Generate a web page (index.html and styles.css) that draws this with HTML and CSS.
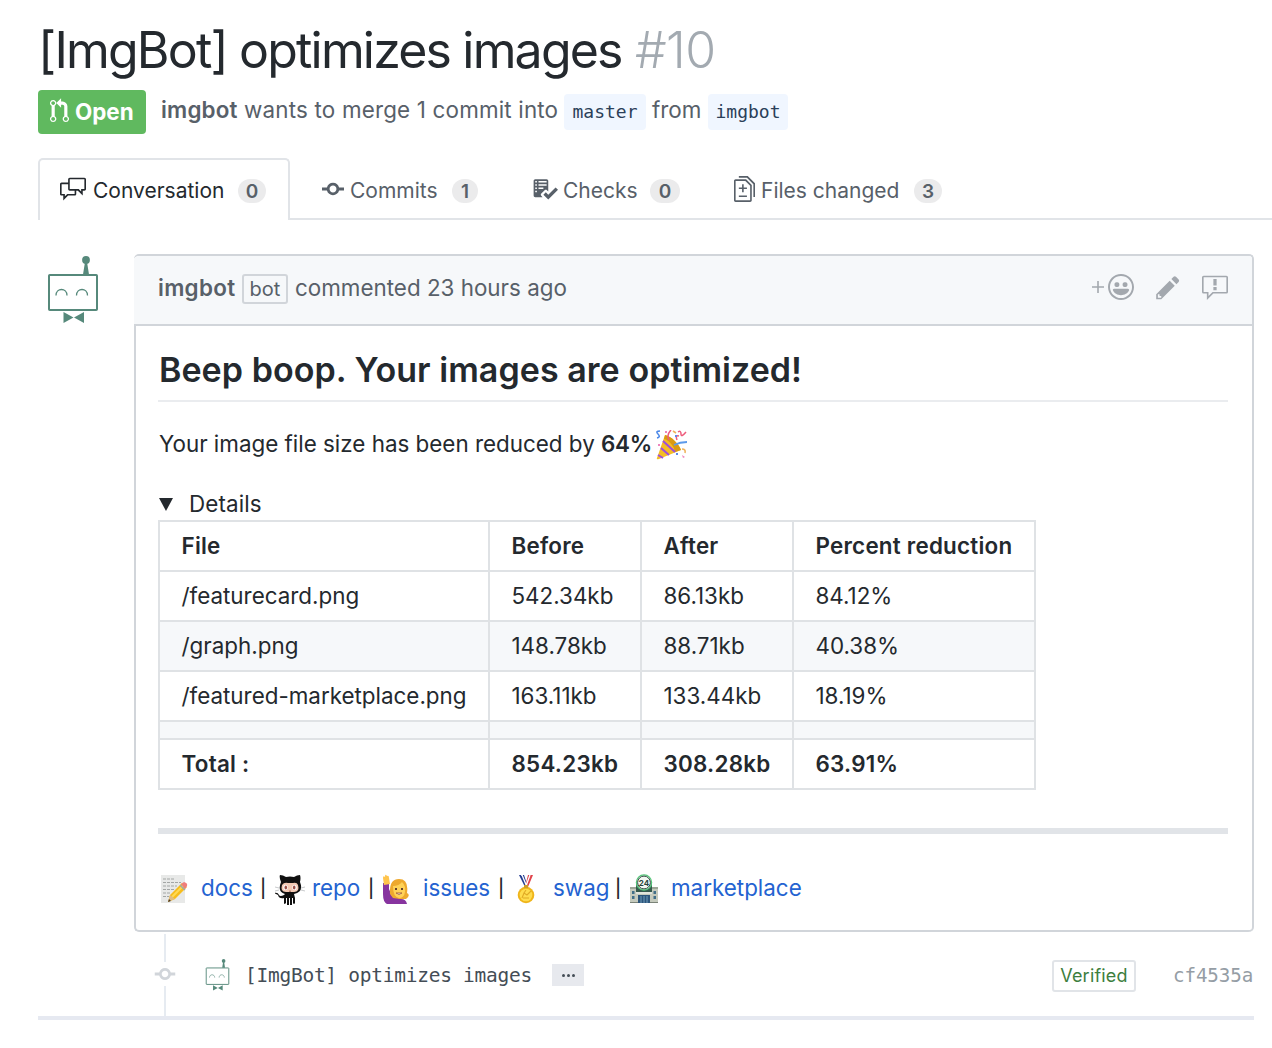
FILE: index.html
```html
<!DOCTYPE html>
<html lang="en">
<head>
<meta charset="utf-8">
<title>[ImgBot] optimizes images #10</title>
<link rel="stylesheet" href="styles.css">
</head>
<body>
<svg class="defs" width="0" height="0" aria-hidden="true">
  <symbol id="commit" viewBox="0 0 14 16"><path d="M10.86 7c-.45-1.72-2-3-3.86-3-1.86 0-3.41 1.28-3.86 3H0v2h3.14c.45 1.72 2 3 3.86 3 1.86 0 3.41-1.28 3.86-3H14V7h-3.14zM7 10.2c-1.22 0-2.2-.98-2.2-2.2 0-1.22.98-2.2 2.2-2.2 1.22 0 2.2.98 2.2 2.2 0 1.22-.98 2.2-2.2 2.2z"/></symbol>
  <symbol id="robot" viewBox="0 0 52 68">
    <rect x="2" y="19" width="48" height="35" rx=".8" fill="none" stroke="currentColor" stroke-width="2"/>
    <circle cx="39" cy="4" r="3.9"/>
    <path d="M38 6h2l2 12.500h-6zM16.500 56l10 5.500-10 5.500zM37 56l-10 5.500 10 5.500z"/>
    <path d="M9 39.500c0-8 11-8 11 0M29.500 39.500c0-8 11-8 11 0" fill="none" stroke="currentColor" stroke-width="1.300"/>
  </symbol>
</svg>
<main class="page">
  <h1 class="title"><span class="title-text">[ImgBot] optimizes images</span> <span class="number">#10</span></h1>

  <div class="meta">
    <span class="state"><svg width="19" height="26" viewBox="0 0 12 16"><path d="M11 11.280V5c-.03-.78-.34-1.470-.94-2.060C9.460 2.350 8.780 2.030 8 2H7V0L4 3l3 3V4h1c.27.02.48.11.69.31.21.2.3.42.31.69v6.280A1.993 1.993 0 0 0 10 15a1.993 1.993 0 0 0 1-3.720zm-1 2.920c-.66 0-1.200-.55-1.200-1.200 0-.65.55-1.200 1.200-1.200.65 0 1.200.55 1.200 1.200 0 .65-.55 1.200-1.200 1.200zM4 3c0-1.110-.89-2-2-2a1.993 1.993 0 0 0-1 3.720v6.560A1.993 1.993 0 0 0 2 15a1.993 1.993 0 0 0 1-3.720V4.720c.59-.34 1-.98 1-1.720zm-.8 10c0 .66-.55 1.200-1.200 1.200-.65 0-1.200-.55-1.200-1.200 0-.65.55-1.200 1.200-1.200.65 0 1.200.55 1.200 1.200zM2 4.200C1.340 4.200.8 3.650.8 3c0-.65.55-1.200 1.200-1.200.65 0 1.200.55 1.200 1.200 0 .65-.55 1.200-1.200 1.200z"/></svg><span>Open</span></span>
    <span class="merge"><b>imgbot</b> wants to merge 1 commit into</span>
    <code class="branch branch-base">master</code>
    <span class="from">from</span>
    <code class="branch branch-head">imgbot</code>
  </div>

  <nav class="tabs">
    <a class="tab active"><svg width="26" height="26" viewBox="0 0 16 16"><path d="M15 1H6c-.55 0-1 .45-1 1v2H1c-.55 0-1 .45-1 1v6c0 .55.45 1 1 1h1v3l3-3h4c.55 0 1-.45 1-1V9h1l3 3V9h1c.55 0 1-.45 1-1V2c0-.55-.45-1-1-1zM9 11H4.500L3 12.500V11H1V5h4v3c0 .55.45 1 1 1h3v2zm6-3h-2v1.500L11.500 8H6V2h9v6z"/></svg><span class="label">Conversation</span><span class="count">0</span></a>
    <a class="tab commits"><svg width="22" height="26"><use href="#commit"/></svg><span class="label">Commits</span><span class="count">1</span></a>
    <a class="tab checks"><svg width="26" height="26" viewBox="0 0 16 16"><path fill-rule="evenodd" d="M16 8.500l-6 6-3-3L8.500 10l1.500 1.500L14.500 7 16 8.500zM5.700 12.200l.8.8H2c-.55 0-1-.45-1-1V3c0-.55.45-1 1-1h7c.55 0 1 .45 1 1v6.500l-.8-.8c-.39-.39-1.030-.39-1.420 0L5.700 10.800a.996.996 0 0 0 0 1.410v-.01zM4 4h5V3H4v1zm0 2h5V5H4v1zm0 2h3V7H4v1zM3 9H2v1h1V9zm0-2H2v1h1V7zm0-2H2v1h1V5zm0-2H2v1h1V3z"/></svg><span class="label">Checks</span><span class="count">0</span></a>
    <a class="tab files"><svg width="21" height="26" viewBox="0 0 13 16"><path d="M6 7h2v1H6v2H5V8H3V7h2V5h1v2zm-3 6h5v-1H3v1zM7.500 2L11 5.500V15c0 .55-.45 1-1 1H1c-.55 0-1-.45-1-1V3c0-.55.45-1 1-1h6.500zM10 6L7 3H1v12h9V6zM8.500 0H3v1h5l4 4v8h1V4.500L8.500 0z"/></svg><span class="label">Files changed</span><span class="count">3</span></a>
  </nav>

  <section class="thread">
    <svg class="avatar" width="52" height="68"><use href="#robot"/></svg>
    <article class="comment">
      <header class="comment-head">
        <b>imgbot</b><span class="bot">bot</span><span class="when">commented 23 hours ago</span>
        <div class="actions">
          <svg width="12" height="12" viewBox="0 0 12 12"><path d="M5.200 0h1.600v5.200H12v1.600H6.800V12H5.200V6.800H0V5.200h5.200z"/></svg>
          <svg class="smile" width="26" height="26" viewBox="0 0 16 16"><path d="M8 0C3.580 0 0 3.580 0 8s3.580 8 8 8 8-3.580 8-8-3.580-8-8-8zm4.810 12.810a6.720 6.720 0 0 1-2.170 1.450c-.83.36-1.720.53-2.640.53-.92 0-1.810-.17-2.640-.53-.81-.34-1.550-.83-2.170-1.450a6.773 6.773 0 0 1-1.450-2.170A6.590 6.590 0 0 1 1.210 8c0-.92.17-1.810.53-2.640.34-.81.83-1.550 1.450-2.170.62-.62 1.360-1.110 2.170-1.450A6.590 6.590 0 0 1 8 1.210c.92 0 1.810.17 2.640.53.81.34 1.550.83 2.170 1.450.62.62 1.110 1.360 1.450 2.170.36.83.53 1.720.53 2.640 0 .92-.17 1.810-.53 2.640-.34.81-.83 1.550-1.450 2.170zM4 6.800v-.59c0-.66.53-1.190 1.200-1.190h.59c.66 0 1.190.53 1.190 1.190v.59c0 .67-.53 1.200-1.190 1.200H5.200C4.530 8 4 7.470 4 6.800zm5 0v-.59c0-.66.53-1.190 1.200-1.190h.59c.66 0 1.190.53 1.190 1.190v.59c0 .67-.53 1.200-1.190 1.200h-.59C9.530 8 9 7.470 9 6.800zm4 3.200c-.72 1.880-2.910 3-5 3s-4.280-1.130-5-3c-.14-.39.23-1 .66-1h8.590c.41 0 .89.61.75 1z"/></svg>
          <svg class="pencil" width="24" height="27" viewBox="0 0 14 16"><path d="M0 12v3h3l8-8-3-3-8 8zm3 2H1v-2h1v1h1v1zm10.300-9.300L12 6 9 3l1.300-1.300a.996.996 0 0 1 1.410 0l1.590 1.590c.39.39.39 1.020 0 1.410z"/></svg>
          <svg class="report" width="26" height="26" viewBox="0 0 16 16"><path fill-rule="evenodd" d="M0 2a1 1 0 0 1 1-1h14a1 1 0 0 1 1 1v9a1 1 0 0 1-1 1H7l-4 4v-4H1a1 1 0 0 1-1-1V2zm1 0h14v9H6.500L4 13.500V11H1V2zm6 6h2v2H7V8zm0-5h2v4H7V3z"/></svg>
        </div>
      </header>
      <div class="comment-body">
        <h2>Beep boop. Your images are optimized!</h2>
        <p class="summary"><span class="sentence">Your image file size has been reduced by</span><b>64%</b>
          <svg width="31" height="30" viewBox="0 0 31 30">
            <path d="M1 28L9 5C15 6 23 14 25 20L3 29Q0 30 1 28z" fill="#f5bd24"/>
            <path d="M9 5C15 6 23 14 25 20L19 22C18 16 13 10 8 9z" fill="#d99a13"/>
            <path d="M5 18l8 7M7 11l12 11M2 25l5 3" stroke="#9d4edd" stroke-width="2"/>
            <path d="M18 15q6-3 13-3" fill="none" stroke="#5c9aea" stroke-width="1.800"/>
            <path d="M13 10q-3-5 2-10M21 10q-2-5 2-4M22 2q3-2 3 2t5-2" fill="none" stroke="#ee5b7b" stroke-width="1.500"/>
            <path d="M1 8q4-1 1-4t2-3" fill="none" stroke="#4c88e8" stroke-width="1.500"/>
            <path d="M26 19q4 0 3 4M17 1l3 2" fill="none" stroke="#efb35d" stroke-width="1.600"/>
            <path d="M9 1h2v2H9zM26 25l3 2-2 1zM2 14h2v2H2z" fill="#ed84bd"/><path d="M20 23h2v2h-2zM19 5h2v2h-2z" fill="#5d8bea"/>
          </svg>
        </p>
        <div class="details"><svg width="14" height="13" viewBox="0 0 14 13"><path d="M0 0h14L7 13z"/></svg><span>Details</span></div>
        <table>
          <colgroup><col class="c1"><col class="c2"><col class="c3"><col class="c4"></colgroup>
          <tr><th>File</th><th>Before</th><th>After</th><th>Percent reduction</th></tr>
          <tr><td>/featurecard.png</td><td>542.34kb</td><td>86.13kb</td><td>84.12%</td></tr>
          <tr class="alt"><td>/graph.png</td><td>148.78kb</td><td>88.71kb</td><td>40.38%</td></tr>
          <tr><td>/featured-marketplace.png</td><td>163.11kb</td><td>133.44kb</td><td>18.19%</td></tr>
          <tr class="alt empty"><td></td><td></td><td></td><td></td></tr>
          <tr class="total"><td>Total :</td><td>854.23kb</td><td>308.28kb</td><td>63.91%</td></tr>
        </table>
        <hr>
        <div class="links">
          <svg width="30" height="30" viewBox="0 0 30 30">
            <path d="M3 1h24v28H3z" fill="#e8e9e8"/><path d="M5 5h11M5 8.500h18M5 12h14M5 15.500h12M5 19h8M5 22.500h6" stroke="#a3a6a5" stroke-width="1" stroke-dasharray="3 1"/>
            <path d="M10 28l2-7L24 9l5 4-12 12z" fill="#f7bd1c"/><path d="M14 23L26 11" stroke="#ffda54" stroke-width="2"/><path d="M23 10l3-2q4 1 3 4l-2 3z" fill="#ef7e7c"/><path d="M22 11l5 5" stroke="#9da8ad" stroke-width="1.500"/><path d="M12 21l5 4-7 3z" fill="#e1bd82"/><path d="M10 28l1-3 2 2z" fill="#493926"/>
          </svg><a>docs</a><span>|</span>
          <svg width="32" height="32" viewBox="0 0 32 32">
            <path d="M6 9Q4 4 5 2q3 0 6 2 4-1 8 0 3-2 6-2 1 3 0 7 4 10-6 12l1 4v5q-1 2-2 0v-5h-1v7h-2v-7h-1v7h-2v-7h-1v5q-2 2-2 0v-5q-5 1-6-3l-4-2q4-1 5 2 1 2 5 0l1-1Q2 19 6 9z" fill="#101010"/>
            <path d="M7 12q2-3 6-2h5q4-1 5 2 2 7-4 7h-8q-6 0-4-7z" fill="#f3c9b3"/><ellipse cx="10.500" cy="14.500" rx="2.200" ry="2.800" fill="#fff"/><ellipse cx="19.500" cy="14.500" rx="2.200" ry="2.800" fill="#fff"/><ellipse cx="10.800" cy="14.500" rx="1.300" ry="2" fill="#9a5149"/><ellipse cx="19.200" cy="14.500" rx="1.300" ry="2" fill="#9a5149"/><path d="M14 18q1 .7 2 0" fill="none" stroke="#a46050"/>
            <path d="M0 14l4 1M0 18l4-1M30 14l-4 1M30 18l-4-1" stroke="#c8cacc"/>
          </svg><a>repo</a><span>|</span>
          <svg width="28" height="30" viewBox="0 0 28 30">
            <path d="M1 9h6v6l3 7 9 3q5 0 6 5H5Q1 28 1 20z" fill="#87349f"/><path d="M2 11L1 4q0-3 2-1 0-4 2-1 2-1 2 2l1 6z" fill="#ffc44d"/>
            <path d="M8 20Q7 5 17 5t8 14q4 2-1 6h-6l-7-1z" fill="#eea92d"/><path d="M11 12q6 0 9-4 4 4 3 10-1 6-6 6-6-1-6-12z" fill="#ffd257"/><path d="M13 14h2v2h-2zM19 14h2v2h-2z" fill="#65402a"/><path d="M14 19h6q-3 3-6 0z" fill="#fff" stroke="#9e542c" stroke-width=".8"/>
          </svg><a>issues</a><span>|</span>
          <svg class="medal" width="20" height="30" viewBox="0 0 20 30">
            <path d="M3 1h5l4 12H9z" fill="#243d91"/><path d="M12 1h5l-5 12H9z" fill="#e1434b"/><path d="M5 1h1l5 12M14 1l-4 11" fill="none" stroke="#fff" stroke-width="1.300"/>
            <circle cx="10" cy="21" r="8.300" fill="#efb51b"/><circle cx="10" cy="21" r="6.300" fill="#ffdc4e"/><path d="M8 11h4v3H8z" fill="#ce9d27"/><path d="M6 24l2-5 3 2 4-4M8 19l2-3M7 24h6" fill="none" stroke="#e0aa25" stroke-width="1.100"/>
          </svg><a>swag</a><span>|</span>
          <svg width="30" height="30" viewBox="0 0 30 30">
            <path d="M1 13h28v16H1z" fill="#c5cabd"/><path d="M7 8h16v11H7z" fill="#35594d"/><circle cx="15" cy="8.500" r="7.600" fill="#f4f8f3" stroke="#55c77a" stroke-width="1.300"/><circle cx="15" cy="8.500" r="6.400" fill="none" stroke="#354843"/>
            <text x="15" y="11.800" text-anchor="middle" class="clock">24</text><path d="M1 14h6M23 14h6" stroke="#9da597" stroke-width="2"/><path d="M7 19h16" stroke="#e1e4dc" stroke-width="2"/><path d="M9 21h12v8H9z" fill="#2c557b"/><path d="M12 22v7M15 22v7M18 22v7" stroke="#6f9dbb"/><path d="M3 17h2.500v3H3zm0 5h2.500v3H3zM24.500 17H27v3h-2.500zm0 5H27v3h-2.500z" fill="#426f89"/><path d="M1 28.500h8M21 28.500h8" stroke="#7b8378"/>
          </svg><a>marketplace</a>
        </div>
      </div>
    </article>
  </section>

  <section class="commit-row">
    <div class="rail"><i></i><svg width="22" height="24" viewBox="0 0 14 16"><use href="#commit" width="14" height="16"/></svg><i class="lower"></i></div>
    <svg class="mini" width="25" height="32"><use href="#robot"/></svg>
    <code class="message">[ImgBot] optimizes images</code>
    <span class="more"><i></i><i></i><i></i></span>
    <span class="verified">Verified</span>
    <code class="sha">cf4535a</code>
  </section>
</main>
</body>
</html>
```
FILE: styles.css
```css
* { box-sizing: border-box; }
body { margin: 0; background: #fff; color: #24292e; font: 400 22.4px/30px Inter, "Liberation Sans", sans-serif; overflow: hidden; }
svg { display: block; fill: currentColor; flex: none; }
.defs { position: absolute; }
span, b, a, code { white-space: nowrap; }
b { font-weight: 600; }
code { font-family: "DejaVu Sans Mono", "Liberation Mono", monospace; }
.page { width: 1272px; height: 1048px; padding: 20px 0 0 38px; }
.title { margin: 0; height: 70px; font-size: 50px; font-weight: 400; line-height: 60px; letter-spacing: -1.820px; display: flex; }
.title-text { width: 597px; }
.number { color: #a3aab1; font-weight: 300; letter-spacing: -.6px; }

.meta { display: flex; height: 44px; color: #586069; line-height: 40px; }
.state { display: flex; align-items: center; width: 108px; height: 44px; padding-left: 12px; gap: 6px; margin-right: 15px; border-radius: 4px; background: #60b95f; color: #fff; font-weight: 700; }
.state svg { margin-bottom: 2px; }
.merge { width: 403px; letter-spacing: .18px; }
.branch { margin-top: 4px; height: 36px; border-radius: 4px; background: #f0f6ff; color: #2b3f59; font-size: 18px; line-height: 36px; text-align: center; }
.branch-base { width: 82px; margin-right: 6px; }
.from { width: 56px; }
.branch-head { width: 80px; }

.tabs { display: flex; height: 62px; margin-top: 24px; border-bottom: 2px solid #e1e4e8; color: #586069; font-size: 21px; }
.tab { display: flex; align-items: center; height: 62px; padding-top: 3px; }
.tab.active { width: 252px; padding: 2px 0 0 20px; border: 2px solid #e1e4e8; border-bottom: 0; border-radius: 5px 5px 0 0; background: #fff; color: #24292e; }
.tab svg { margin-bottom: 4px; margin-right: 7px; }
.active .label { width: 145px; }
.commits { margin-left: 32px; width: 210px; }
.commits svg { margin-right: 6px; }
.commits .label { width: 102px; }
.commits .count { width: 26px; }
.checks { width: 202px; }
.checks svg { margin-right: 5px; }
.checks .label { width: 87px; }
.checks .count { width: 30px; }
.tab.files svg { margin-right: 6px; }
.files .label { width: 153px; }
.count { width: 28px; height: 24px; border-radius: 12px; background: #ebebec; color: #586069; font-size: 19px; line-height: 25px; font-weight: 600; text-align: center; }

.thread { display: flex; margin-top: 34px; height: 678px; }
.avatar { margin: 2px 35px 0 9px; color: #56897b; }
.comment { display: flex; flex-direction: column; width: 1120px; border: 2px solid #d1d5da; border-width: 2px 2px 0 0; border-radius: 5px; }
.comment-head { display: flex; align-items: center; height: 70px; padding: 0 24px 4px 24px; border-bottom: 2px solid #d1d5da; border-radius: 5px 3px 0 0; background: #f6f8fa; color: #586069; }
.comment-head b { width: 84px; letter-spacing: .3px; }
.bot { width: 46px; height: 30px; margin: 1px 7px 0 0; border: 2px solid #d1d5da; border-radius: 3px; font-size: 20px; line-height: 27px; text-align: center; }
.actions { display: flex; align-items: center; margin: -2px 0 0 auto; color: #a3a8ae; }
.smile { margin-left: 4px; }
.pencil { margin-left: 22px; }
.report { margin-left: 22px; }
.comment-body { flex: 1; padding: 0 24px 0 22px; border: 2px solid #d1d5da; border-width: 0 0 2px 2px; border-radius: 0 0 4px 5px; }
h2 { height: 76px; margin: 0; padding: 24px 0 0 1px; border-bottom: 2px solid #eaecef; font-size: 34px; line-height: 40px; font-weight: 600; letter-spacing: .05px; }
.summary { display: flex; height: 30px; margin: 27px 0 0; padding-left: 1px; line-height: 30px; }
.sentence { width: 442px; }
.summary b { width: 55px; letter-spacing: -.2px; }
.summary svg { margin-top: 1px; }
.details { display: flex; align-items: center; gap: 16px; height: 30px; margin: 30px 0 1px; padding-left: 1px; }
.details span { letter-spacing: .12px; }
table { width: 878px; table-layout: fixed; border-collapse: collapse; }
.c1 { width: 330px; } .c2 { width: 152px; } .c3 { width: 152px; } .c4 { width: 242px; }
th, td { height: 50px; padding: 0 0 0 21.500px; border: 2px solid #dfe2e5; text-align: left; white-space: nowrap; }
th { font-weight: 600; letter-spacing: .23px; }
.alt { background: #f6f8fa; }
.empty td { height: 18px; }
.total td { font-weight: 600; letter-spacing: .25px; }
hr { height: 6px; margin: 38px 0 39px; border: 0; background: #e1e4e8; }
.links { display: grid; grid-template-columns: 43px 58px 16px 37px 55px 15px 41px 74px 18px 38px 61px 15px 42px auto; align-items: center; height: 32px; }
.links a { color: #2463d1; margin-top: -2px; }
.links span { font-size: 18px; font-weight: 550; margin: -1px 0 0 1px; }
.medal { margin-left: 1px; }
.clock { font: 700 8px Inter, sans-serif; fill: #27443b; }

.commit-row { display: flex; align-items: center; width: 1216px; height: 88px; border-bottom: 4px solid #e6e9f1; }
.rail { width: 22px; height: 84px; margin-left: 116px; display: flex; flex-direction: column; align-items: center; color: #d1d5da; padding-top: 2px; }
.rail i { width: 2px; height: 28px; background: #e6ebf1; }
.rail .lower { height: 30px; }
.mini { margin: 1px 15px 0 29px; color: #56897b; }
.message { width: 307px; margin-top: 3px; font-size: 19.500px; letter-spacing: -.26px; color: #444d56; }
.more { display: flex; justify-content: center; align-items: center; gap: 2px; width: 32px; height: 22px; background: #e7e9ee; margin-top: 2px; }
.more i { width: 3px; height: 3px; border-radius: 2px; background: #444d56; }
.verified { width: 84px; height: 32px; margin-left: auto; border: 2px solid #e1e4e8; border-radius: 3px; color: #3d7e3d; font-size: 18px; line-height: 28px; text-align: center; margin-top: 3px; letter-spacing: .2px; }
.sha { width: 81px; margin: 3px 0 0 37px; font-size: 19.200px; letter-spacing: -.1px; color: #959da5; }
```
